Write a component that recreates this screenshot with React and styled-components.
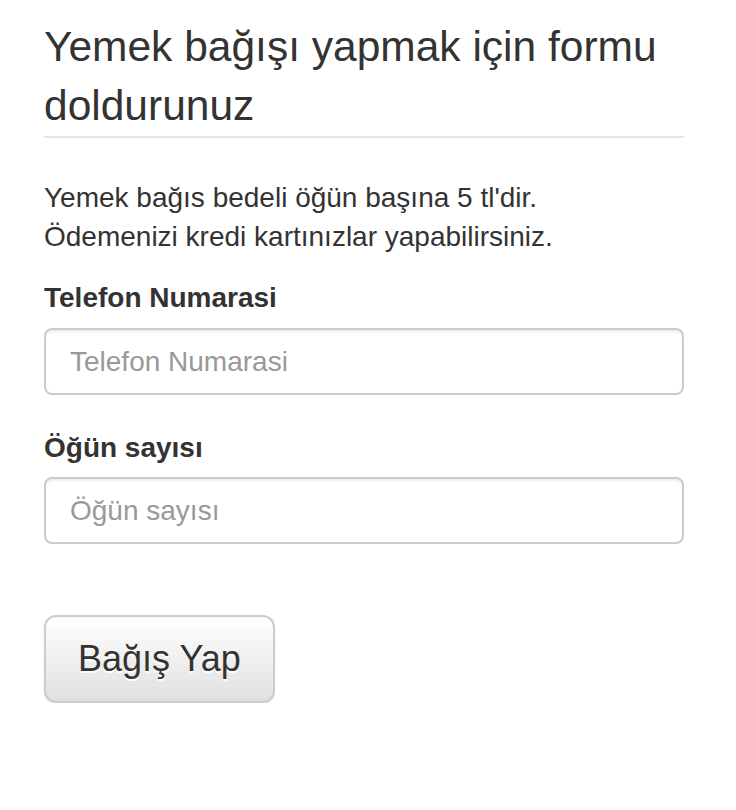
import React from "react";
import styled, { createGlobalStyle } from "styled-components";

const GlobalStyle = createGlobalStyle`
  html, body {
    margin: 0;
    padding: 0;
    background: #fff;
  }
  body {
    font-family: "Liberation Sans", Arial, Helvetica, sans-serif;
    color: #333;
  }
  * {
    box-sizing: border-box;
  }
`;

const Page = styled.div`
  width: 640px;
  margin: 0 0 0 44px;
  padding-top: 17px;
`;

const Legend = styled.h2`
  margin: 0 0 40px;
  padding-bottom: 1px;
  font-size: 42.5px;
  font-weight: normal;
  line-height: 59px;
  color: #333;
  border-bottom: 2px solid #e5e5e5;
`;

const Intro = styled.p`
  margin: 0 0 22px;
  font-size: 28px;
  line-height: 39px;
`;

const Group = styled.div`
  display: flex;
  flex-direction: column;
  margin-bottom: ${(p) => p.$gap || "30px"};
`;

const Label = styled.label`
  font-size: 28px;
  font-weight: bold;
  line-height: 40px;
  margin-bottom: ${(p) => p.$gap || "9px"};
`;

const Input = styled.input`
  display: block;
  width: 100%;
  height: 67px;
  padding: 12px 24px;
  font-family: inherit;
  font-size: 28px;
  color: #555;
  background: #fff;
  border: 2px solid #ccc;
  border-radius: 8px;
  box-shadow: inset 0 2px 2px rgba(0, 0, 0, 0.075);
  outline: none;

  &::placeholder {
    color: #999;
  }
`;

const Button = styled.button`
  align-self: flex-start;
  padding: 20px 32px;
  font-family: inherit;
  font-size: 36px;
  line-height: 44px;
  color: #333;
  text-shadow: 0 2px 0 #fff;
  background: linear-gradient(to bottom, #fff 0%, #e0e0e0 100%);
  border: 2px solid #ccc;
  border-radius: 12px;
  box-shadow: inset 0 2px 0 rgba(255, 255, 255, 0.15),
    0 2px 2px rgba(0, 0, 0, 0.075);
  cursor: pointer;
`;

export default function App() {
  return (
    <>
      <GlobalStyle />
      <Page>
        <Legend>Yemek bağışı yapmak için formu doldurunuz</Legend>
        <Intro>
          Yemek bağıs bedeli öğün başına 5 tl'dir.
          <br />
          Ödemenizi kredi kartınızlar yapabilirsiniz.
        </Intro>
        <Group $gap="33px">
          <Label htmlFor="phone" $gap="10px">
            Telefon Numarasi
          </Label>
          <Input id="phone" type="text" placeholder="Telefon Numarasi" />
        </Group>
        <Group $gap="71px">
          <Label htmlFor="count">Öğün sayısı</Label>
          <Input id="count" type="text" placeholder="Öğün sayısı" />
        </Group>
        <Button type="button">Bağış Yap</Button>
      </Page>
    </>
  );
}
